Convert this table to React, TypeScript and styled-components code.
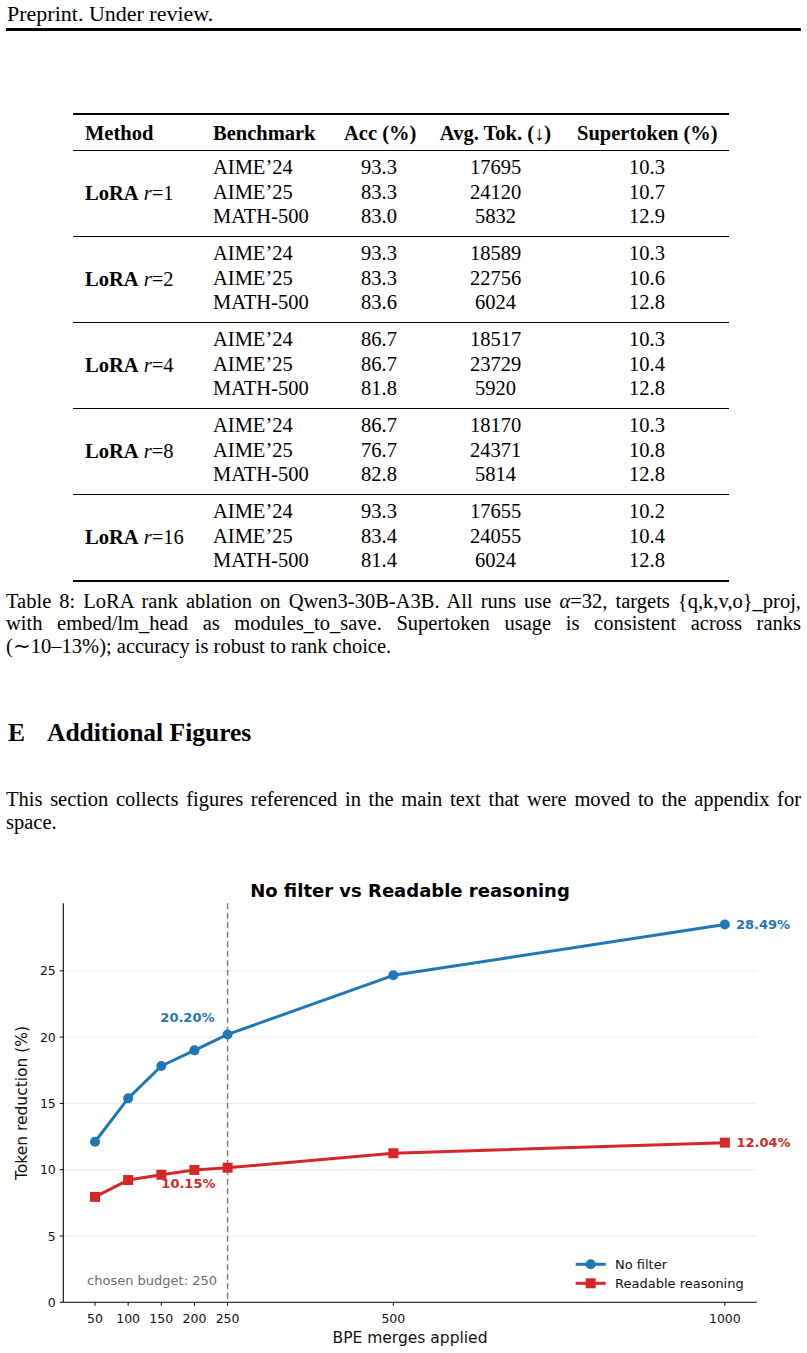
import styled, { createGlobalStyle } from 'styled-components';

const GlobalStyle = createGlobalStyle`
  html, body {
    margin: 0;
    padding: 0;
    background: #fff;
  }
  body {
    font-family: "Liberation Serif", "Times New Roman", serif;
    color: #000;
  }
`;

const Page = styled.div`
  width: 807px;
  height: 1353px;
  box-sizing: border-box;
  padding: 0 6px;
  overflow: hidden;
`;

const RunningHead = styled.header`
  padding: 2px 0 2px 1px;
  border-bottom: 3px solid #000;
  font-size: 22px;
  line-height: 24px;
`;

const Table = styled.table`
  margin: 82px 0 0 67px;
  width: 656px;
  border-collapse: collapse;
  table-layout: fixed;
  font-size: 20.5px;
  border-top: 2px solid #000;
`;

const HeadCell = styled.th<{ $center?: boolean }>`
  padding: 5.5px 12px 5px;
  line-height: 24.5px;
  font-weight: bold;
  text-align: ${(p) => (p.$center ? 'center' : 'left')};
  white-space: nowrap;
  border-bottom: 1px solid #000;
`;

const Group = styled.tbody`
  border-bottom: 1px solid #000;

  &:last-of-type {
    border-bottom: 2px solid #000;
  }
`;

const MethodCell = styled.td`
  padding: 0 12px;
  vertical-align: middle;
  white-space: nowrap;
`;

const Cell = styled.td<{ $center?: boolean; $first?: boolean; $last?: boolean }>`
  padding: ${(p) => (p.$first ? '4px' : '0')} 12px ${(p) => (p.$last ? '7.5px' : '0')};
  line-height: 24.5px;
  text-align: ${(p) => (p.$center ? 'center' : 'left')};
  white-space: nowrap;
`;

const Caption = styled.p`
  margin: 7.5px 0 0;
  font-size: 20.5px;
  line-height: 22.5px;
  text-align: justify;
`;

const NoBreak = styled.span`
  white-space: nowrap;
`;

const SectionTitle = styled.h2`
  margin: 61px 0 0;
  font-size: 25.5px;
  line-height: 30px;
  font-weight: bold;
  padding-left: 2px;
`;

const SectionNumber = styled.span`
  display: inline-block;
  width: 39px;
`;

const Paragraph = styled.p`
  margin: 40px 0 0;
  font-size: 20.5px;
  line-height: 22.5px;
  text-align: justify;
`;

const Figure = styled.svg`
  display: block;
  margin: 37px -6px 0;
  font-family: "DejaVu Sans", sans-serif;
`;

const ChartTitle = styled.text`
  font-size: 18px;
  font-weight: bold;
  fill: #000;
`;

const AxisLabel = styled.text`
  font-size: 15.5px;
  fill: #111;
`;

const TickLabel = styled.text`
  font-size: 12.5px;
  fill: #111;
`;

const Note = styled.text<{ $color: string }>`
  font-size: 13px;
  font-weight: bold;
  fill: ${(p) => p.$color};
`;

const BudgetLabel = styled.text`
  font-size: 13px;
  fill: #6b6b6b;
`;

const LegendLabel = styled.text`
  font-size: 13px;
  fill: #111;
`;

const BLUE = '#1f77b4';
const RED = '#d62728';

const groups = [
  { rank: 1, rows: [['AIME’24', '93.3', '17695', '10.3'], ['AIME’25', '83.3', '24120', '10.7'], ['MATH-500', '83.0', '5832', '12.9']] },
  { rank: 2, rows: [['AIME’24', '93.3', '18589', '10.3'], ['AIME’25', '83.3', '22756', '10.6'], ['MATH-500', '83.6', '6024', '12.8']] },
  { rank: 4, rows: [['AIME’24', '86.7', '18517', '10.3'], ['AIME’25', '86.7', '23729', '10.4'], ['MATH-500', '81.8', '5920', '12.8']] },
  { rank: 8, rows: [['AIME’24', '86.7', '18170', '10.3'], ['AIME’25', '76.7', '24371', '10.8'], ['MATH-500', '82.8', '5814', '12.8']] },
  { rank: 16, rows: [['AIME’24', '93.3', '17655', '10.2'], ['AIME’25', '83.4', '24055', '10.4'], ['MATH-500', '81.4', '6024', '12.8']] },
];

// chart geometry, in page pixels
const LEFT = 63.3;
const RIGHT = 756.7;
const TOP = 903.3;
const BOTTOM = 1302.3;
const xs = (v: number) => 95 + (v - 50) * 0.663;
const ys = (v: number) => BOTTOM - 13.26 * v;

const merges = [50, 100, 150, 200, 250, 500, 1000];
const noFilter = [12.11, 15.38, 17.82, 19.0, 20.2, 24.66, 28.49];
const readable = [7.95, 9.22, 9.62, 9.98, 10.15, 11.24, 12.04];

const toPoints = (vals: number[]) => vals.map((v, i) => `${xs(merges[i])},${ys(v)}`).join(' ');

function Chart() {
  return (
    <Figure width={807} height={483} viewBox="0 870 807 483">
      <ChartTitle x={410} y={896.5} textAnchor="middle">No filter vs Readable reasoning</ChartTitle>

      {[5, 10, 15, 20, 25].map((v) => (
        <line key={v} x1={LEFT} x2={RIGHT} y1={ys(v)} y2={ys(v)} stroke="#ebebeb" strokeWidth={1} />
      ))}

      <line x1={xs(250)} x2={xs(250)} y1={TOP} y2={BOTTOM} stroke="#808080" strokeWidth={1.5} strokeDasharray="6 3.5" />

      <line x1={LEFT} x2={LEFT} y1={TOP} y2={BOTTOM} stroke="#000" strokeWidth={1.1} />
      <line x1={LEFT} x2={RIGHT} y1={BOTTOM} y2={BOTTOM} stroke="#000" strokeWidth={1.1} />

      {[0, 5, 10, 15, 20, 25].map((v) => (
        <g key={v}>
          <line x1={LEFT - 3.5} x2={LEFT} y1={ys(v)} y2={ys(v)} stroke="#000" strokeWidth={1} />
          <TickLabel x={LEFT - 7.5} y={ys(v)} textAnchor="end" dominantBaseline="central">{v}</TickLabel>
        </g>
      ))}
      {merges.map((m) => (
        <g key={m}>
          <line x1={xs(m)} x2={xs(m)} y1={BOTTOM} y2={BOTTOM + 3.5} stroke="#000" strokeWidth={1} />
          <TickLabel x={xs(m)} y={1318.5} textAnchor="middle" dominantBaseline="central">{m}</TickLabel>
        </g>
      ))}

      <AxisLabel x={410} y={1338} textAnchor="middle" dominantBaseline="central">BPE merges applied</AxisLabel>
      <AxisLabel x={22} y={1103} textAnchor="middle" dominantBaseline="central" transform="rotate(-90 22 1103)">
        Token reduction (%)
      </AxisLabel>

      <polyline points={toPoints(noFilter)} fill="none" stroke={BLUE} strokeWidth={3} strokeLinejoin="round" />
      {noFilter.map((v, i) => (
        <circle key={i} cx={xs(merges[i])} cy={ys(v)} r={5} fill={BLUE} />
      ))}
      <polyline points={toPoints(readable)} fill="none" stroke={RED} strokeWidth={3} strokeLinejoin="round" />
      {readable.map((v, i) => (
        <rect key={i} x={xs(merges[i]) - 5} y={ys(v) - 5} width={10} height={10} fill={RED} />
      ))}

      <Note $color={BLUE} x={736} y={924} dominantBaseline="central">28.49%</Note>
      <Note $color={RED} x={736.5} y={1142.5} dominantBaseline="central">12.04%</Note>
      <Note $color={BLUE} x={214.5} y={1017.7} textAnchor="end" dominantBaseline="central">20.20%</Note>
      <Note $color={RED} x={215.5} y={1183.3} textAnchor="end" dominantBaseline="central">10.15%</Note>
      <BudgetLabel x={217} y={1280} textAnchor="end" dominantBaseline="central">chosen budget: 250</BudgetLabel>

      <line x1={575.7} x2={605.7} y1={1264.3} y2={1264.3} stroke={BLUE} strokeWidth={3} />
      <circle cx={590.7} cy={1264.3} r={5} fill={BLUE} />
      <LegendLabel x={615} y={1264.3} dominantBaseline="central">No filter</LegendLabel>
      <line x1={575.7} x2={605.7} y1={1283.3} y2={1283.3} stroke={RED} strokeWidth={3} />
      <rect x={585.7} y={1278.3} width={10} height={10} fill={RED} />
      <LegendLabel x={615} y={1283.3} dominantBaseline="central">Readable reasoning</LegendLabel>
    </Figure>
  );
}

export default function App() {
  return (
    <Page>
      <GlobalStyle />
      <RunningHead>Preprint. Under review.</RunningHead>

      <Table>
        <colgroup>
          <col style={{ width: 128 }} />
          <col style={{ width: 131 }} />
          <col style={{ width: 94 }} />
          <col style={{ width: 139 }} />
          <col style={{ width: 164 }} />
        </colgroup>
        <thead>
          <tr>
            <HeadCell>Method</HeadCell>
            <HeadCell>Benchmark</HeadCell>
            <HeadCell $center>Acc (%)</HeadCell>
            <HeadCell $center>Avg. Tok. (↓)</HeadCell>
            <HeadCell $center>Supertoken (%)</HeadCell>
          </tr>
        </thead>
        {groups.map((g) => (
          <Group key={g.rank}>
            {g.rows.map((row, i) => (
              <tr key={row[0]}>
                {i === 0 && (
                  <MethodCell rowSpan={3}>
                    <b>LoRA</b> <i>r</i>={g.rank}
                  </MethodCell>
                )}
                {row.map((cell, j) => (
                  <Cell key={j} $center={j > 0} $first={i === 0} $last={i === 2}>
                    {cell}
                  </Cell>
                ))}
              </tr>
            ))}
          </Group>
        ))}
      </Table>

      <Caption>
        Table 8: LoRA rank ablation on Qwen3-30B-A3B. All runs use <i>α</i>
        {'=32, targets {q,k,v,o}_proj, with embed/lm_head as modules_to_save. Supertoken usage is consistent across ranks '}
        <NoBreak>(∼10–13%);</NoBreak> accuracy is robust to rank choice.
      </Caption>

      <SectionTitle>
        <SectionNumber>E</SectionNumber>Additional Figures
      </SectionTitle>

      <Paragraph>
        This section collects figures referenced in the main text that were moved to the appendix for space.
      </Paragraph>

      <Chart />
    </Page>
  );
}
